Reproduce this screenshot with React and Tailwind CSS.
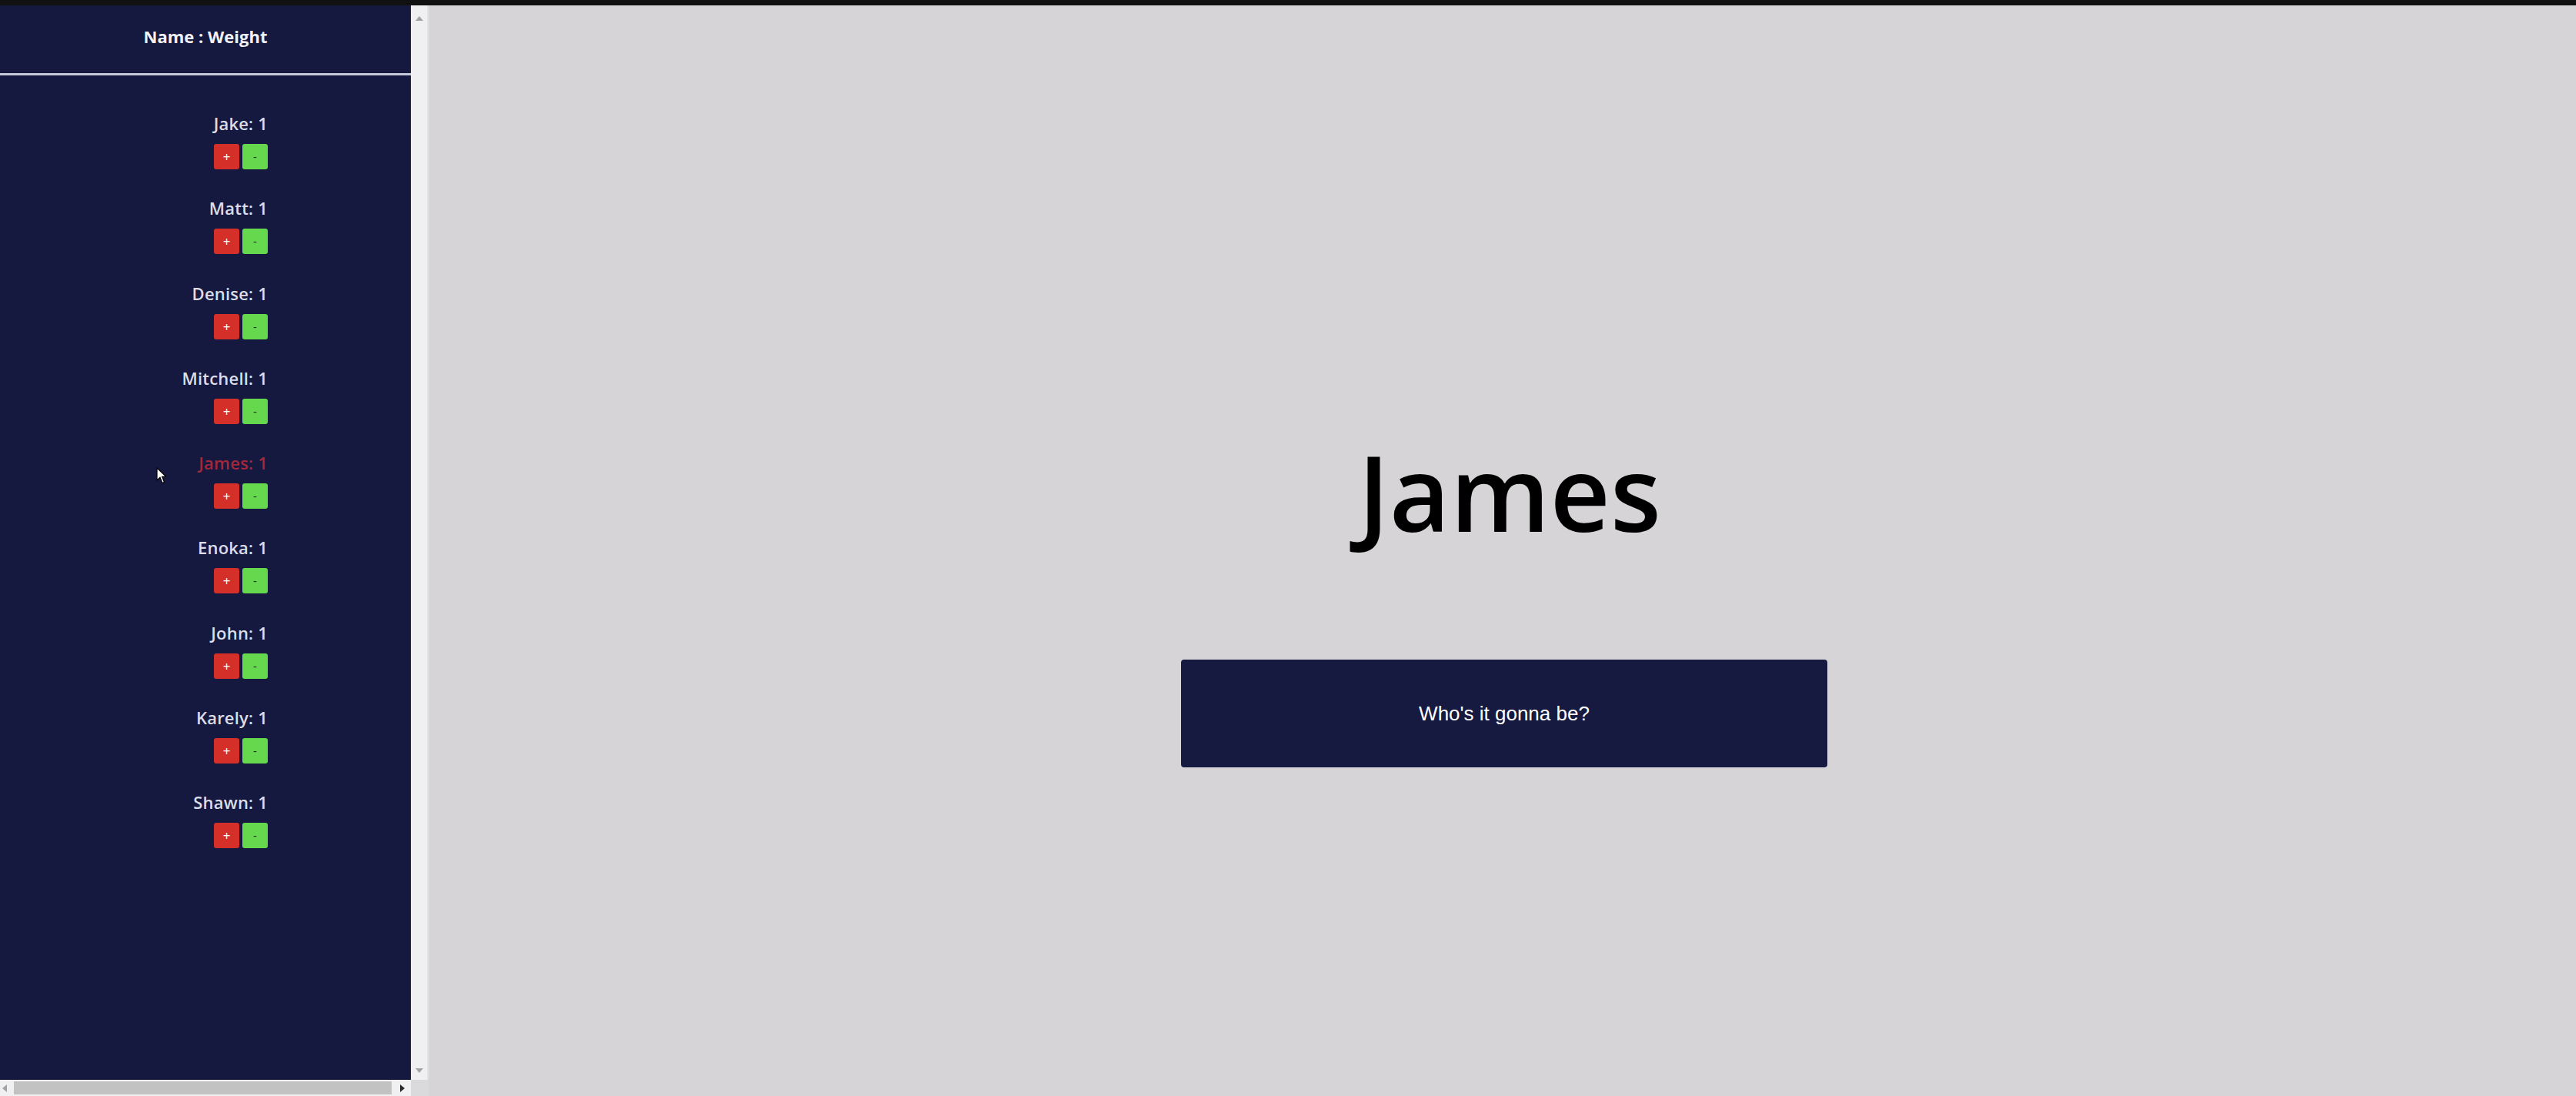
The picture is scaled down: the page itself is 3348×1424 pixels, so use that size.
import React from "react";

const people = [
  { name: "Jake", weight: 1 },
  { name: "Matt", weight: 1 },
  { name: "Denise", weight: 1 },
  { name: "Mitchell", weight: 1 },
  { name: "James", weight: 1, active: true },
  { name: "Enoka", weight: 1 },
  { name: "John", weight: 1 },
  { name: "Karely", weight: 1 },
  { name: "Shawn", weight: 1 },
];

function Cursor() {
  return (
    <svg
      className="absolute left-[203px] top-[600px]"
      width="15"
      height="23"
      viewBox="0 0 15 23"
    >
      <path
        d="M1 1 L1 17 L5 13.2 L8 20.5 L10.6 19.4 L7.6 12.3 L12.8 12.3 Z"
        fill="#ffffff"
        stroke="#000000"
        strokeWidth="1.2"
        strokeLinejoin="round"
      />
    </svg>
  );
}

export default function App() {
  return (
    <div
      className="w-[3348px] h-[1424px] flex flex-col overflow-hidden"
      style={{ fontFamily: '"Open Sans", "Noto Sans", sans-serif' }}
    >
      <div className="h-[7px] bg-[#111111] shrink-0" />
      <div className="flex flex-1 min-h-0">
        <aside className="w-[557px] shrink-0 flex flex-col relative">
          <div className="flex flex-1 min-h-0">
            <div className="w-[534px] bg-[#15183f] flex flex-col">
              <div className="h-[88px] pb-[8px] flex items-center justify-center">
                <h2 className="text-[22px] font-bold text-[#f2f2f6] leading-none">
                  Name : Weight
                </h2>
              </div>
              <div className="h-[3px] bg-[#c6c9d9]" />
              <ul className="w-[348px] pt-[48px] flex flex-col items-end gap-[36.25px]">
                {people.map((p) => (
                  <li key={p.name} className="flex flex-col items-end">
                    <p
                      className={
                        "text-[22px] leading-[28px] font-semibold tracking-[0.2px] " +
                        (p.active ? "text-[#a3283b]" : "text-[#dcdde6]")
                      }
                    >
                      {p.name}: {p.weight}
                    </p>
                    <div className="mt-[13px] flex gap-[4px]">
                      <button className="w-[33px] h-[33px] rounded-[3px] bg-[#d42f29] text-white text-[17px] leading-none flex items-center justify-center">
                        +
                      </button>
                      <button className="w-[33px] h-[33px] rounded-[3px] bg-[#66d84d] text-[#1d2a1a] text-[15px] leading-none flex items-center justify-center">
                        -
                      </button>
                    </div>
                  </li>
                ))}
              </ul>
            </div>
            <div className="w-[23px] bg-[#f0eff1] border-r-[2px] border-[#e4e3e5] flex flex-col items-center justify-between pt-[14px] pb-[9px]">
              <div className="w-0 h-0 border-l-[5px] border-r-[5px] border-b-[6px] border-l-transparent border-r-transparent border-b-[#a3a3a3]" />
              <div className="w-0 h-0 border-l-[5px] border-r-[5px] border-t-[6px] border-l-transparent border-r-transparent border-t-[#a3a3a3]" />
            </div>
          </div>
          <div className="h-[21px] flex shrink-0">
            <div className="w-[534px] bg-[#f0eff1] flex items-center px-[3px]">
              <div className="w-0 h-0 border-t-[5px] border-b-[5px] border-r-[6px] border-t-transparent border-b-transparent border-r-[#a3a3a3]" />
              <div className="ml-[9px] w-[491px] h-[17px] bg-[#c3c2c3]" />
              <div className="ml-[11px] w-0 h-0 border-t-[5px] border-b-[5px] border-l-[6px] border-t-transparent border-b-transparent border-l-[#2a2a2a]" />
            </div>
            <div className="w-[23px] bg-[#dad9db]" />
          </div>
          <Cursor />
        </aside>
        <main className="flex-1 bg-[#d6d4d7] flex flex-col items-center pt-[564px] pl-[5px]">
          <h1 className="pl-[14px] text-[136px] leading-none font-semibold text-black">
            James
          </h1>
          <button
            className="mt-[150px] w-[840px] h-[140px] rounded-[4px] bg-[#161a41] text-white text-[26px] flex items-center justify-center"
            style={{ fontFamily: '"Liberation Sans", Arial, sans-serif' }}
          >
            Who's it gonna be?
          </button>
        </main>
      </div>
    </div>
  );
}
